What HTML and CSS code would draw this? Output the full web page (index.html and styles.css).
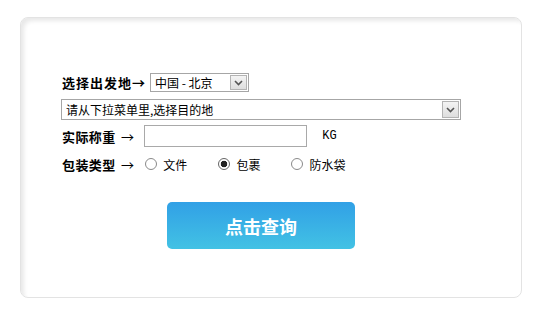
FILE: index.html
```html
<!DOCTYPE html>
<html lang="zh-CN">
<head>
  <meta charset="UTF-8" />
  <title>运费查询</title>
  <link rel="stylesheet" href="styles.css">
</head>
<body>
  <!-- 查询面板 -->
  <div class="panel">
    <form class="query-form">
      <!-- 出发地 -->
      <div class="row row-from">
        <span class="label">选择出发地→</span>
        <span class="select-box select-small">
          <select>
            <option>中国 - 北京</option>
          </select>
          <span class="select-arrow">
            <svg width="9" height="6" viewBox="0 0 9 6"><path d="M1 1 L4.5 4.5 L8 1" fill="none" stroke="#555" stroke-width="1.6"/></svg>
          </span>
        </span>
      </div>

      <!-- 目的地 -->
      <div class="row row-to">
        <span class="select-box select-wide">
          <select>
            <option>请从下拉菜单里,选择目的地</option>
          </select>
          <span class="select-arrow">
            <svg width="9" height="6" viewBox="0 0 9 6"><path d="M1 1 L4.5 4.5 L8 1" fill="none" stroke="#555" stroke-width="1.6"/></svg>
          </span>
        </span>
      </div>

      <!-- 重量 -->
      <div class="row row-weight">
        <span class="label">实际称重 <span class="arrow">→</span></span>
        <input type="text" class="weight-input">
        <span class="unit">KG</span>
      </div>

      <!-- 包装类型 -->
      <div class="row row-type">
        <span class="label">包装类型 <span class="arrow">→</span></span>
        <label class="option"><input type="radio" name="pack"> 文件</label>
        <label class="option"><input type="radio" name="pack" checked> 包裹</label>
        <label class="option"><input type="radio" name="pack"> 防水袋</label>
      </div>

      <button type="button" class="query-btn">点击查询</button>
    </form>
  </div>
</body>
</html>
```

FILE: styles.css
```css
/* ---------- 기본 ---------- */
body {
  margin: 0;
  padding: 17px 0 0 20px;
  background: #fff;
  font-family: "Noto Sans CJK SC", "Liberation Sans", sans-serif;
  font-size: 12px;
  color: #000;
}

/* ---------- 패널 ---------- */
.panel {
  width: 500px;
  height: 279px;
  border: 1px solid #e3e3e3;
  border-radius: 8px;
  box-shadow: inset 4px 4px 4px -1px rgba(0, 0, 0, 0.09);
  box-sizing: content-box;
}

.query-form {
  padding: 55px 0 0 41px;
}

.row {
  display: flex;
  align-items: center;
}

.label {
  font-weight: bold;
  font-size: 13px;
  letter-spacing: 0.4px;
  white-space: nowrap;
}

.row-from .label {
  letter-spacing: 1px;
}

.arrow {
  font-weight: normal;
  margin-left: 2px;
}

/* ---------- 셀렉트 ---------- */
.select-box {
  display: inline-flex;
  align-items: stretch;
  border: 1px solid #a6a6a6;
  background: #fff;
  box-sizing: border-box;
}

.select-box select {
  appearance: none;
  -webkit-appearance: none;
  border: none;
  outline: none;
  background: transparent;
  flex: 1;
  font-family: "Noto Sans CJK SC", "Liberation Sans", sans-serif;
  font-size: 12px;
  color: #000;
  padding: 0 0 0 4px;
  margin: 0;
}

.select-arrow {
  width: 15px;
  margin: 1px;
  border: 1px solid #b4b4b4;
  background: linear-gradient(to bottom, #f4f4f4, #dedede);
  display: flex;
  align-items: center;
  justify-content: center;
}

.select-small {
  width: 99px;
  height: 19px;
  margin-left: 4px;
}

.select-wide {
  width: 400px;
  height: 21px;
  margin-left: -1px;
}

.row-from { height: 19px; }
.row-to { height: 21px; margin-top: 7px; }
.row-weight { height: 22px; margin-top: 5px; }
.row-type { height: 16px; margin-top: 9px; }

/* ---------- 무게 입력 ---------- */
.weight-input {
  width: 163px;
  height: 22px;
  box-sizing: border-box;
  border: 1px solid #a9a9a9;
  margin: 0 0 0 10px;
  padding: 0 4px;
  outline: none;
}

.unit {
  margin-left: 15px;
  font-family: "Liberation Mono", monospace;
  font-size: 12px;
}

/* ---------- 라디오 ---------- */
.option {
  display: inline-flex;
  align-items: center;
  gap: 6px;
  margin-right: 31px;
}

.option:first-of-type {
  margin-left: 11px;
}

.option input {
  appearance: none;
  -webkit-appearance: none;
  width: 12px;
  height: 12px;
  margin: 0;
  border: 1px solid #8a8a8a;
  border-radius: 50%;
  background: #fff;
}

.option input:checked {
  background: radial-gradient(circle, #222 0, #222 3px, #fff 3.6px);
  border-color: #666;
}

/* ---------- 조회 버튼 ---------- */
.query-btn {
  display: block;
  width: 188px;
  height: 47px;
  margin: 30px 0 0 105px;
  border: none;
  border-radius: 5px;
  background: linear-gradient(to bottom, #31a0e6, #42c2e4);
  color: #fff;
  font-family: "Noto Sans CJK SC", sans-serif;
  font-size: 18px;
  font-weight: bold;
  cursor: pointer;
}
```
